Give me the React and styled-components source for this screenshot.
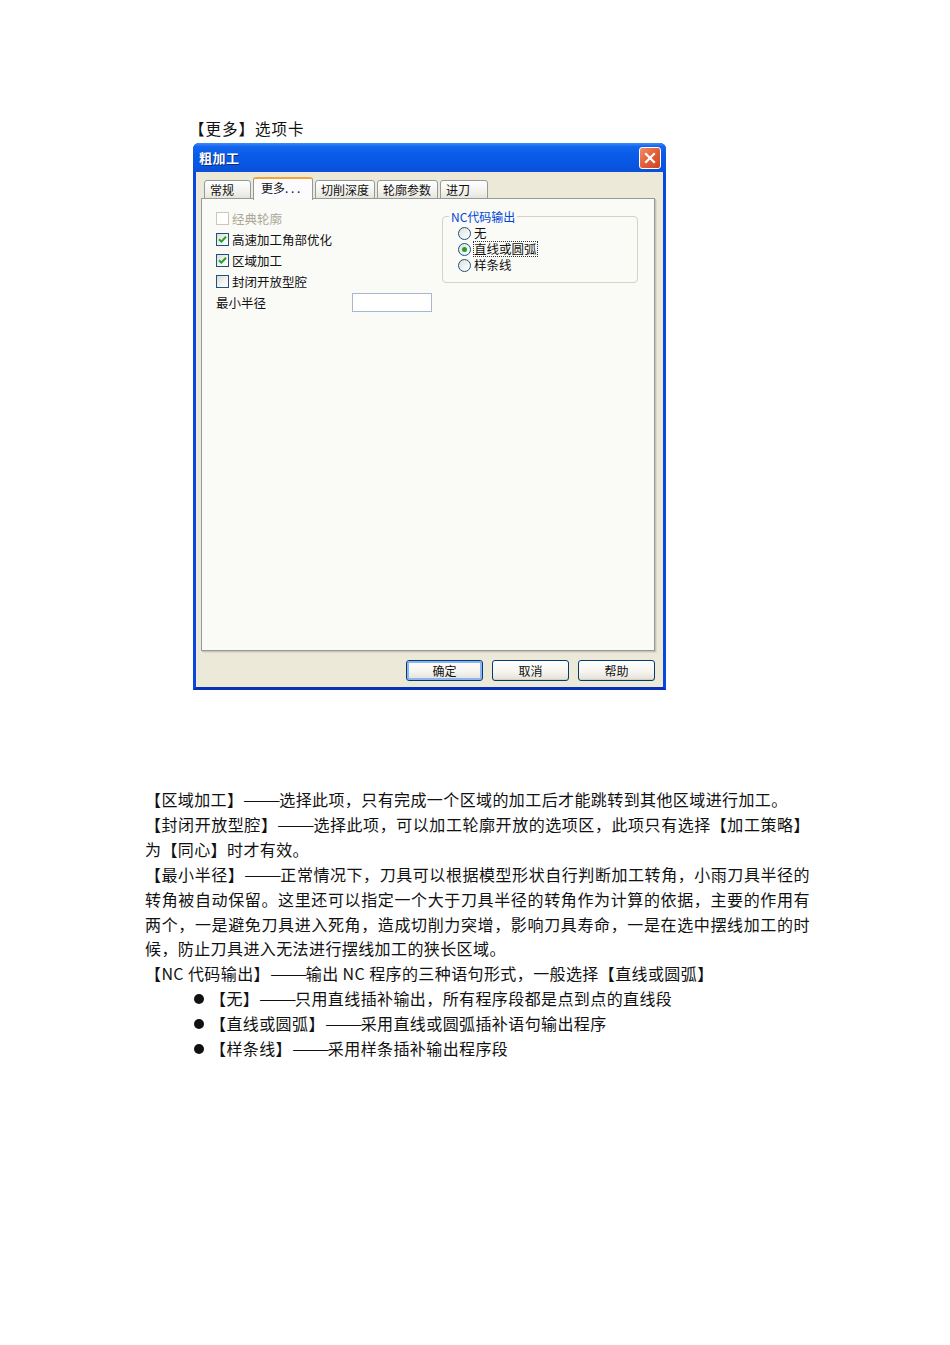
import styled, { createGlobalStyle } from 'styled-components'

const GlobalStyle = createGlobalStyle`
  html, body {
    margin: 0;
    padding: 0;
    background: #fff;
  }
  body {
    font-family: "Noto Sans CJK SC", "Noto Sans", sans-serif;
    color: #111;
  }
`;

const tabs = ['常规', '更多. . .', '切削深度', '轮廓参数', '进刀']
const tabWidths = [47, 60, 60, 61, 48]

const options = [
  { label: '经典轮廓', checked: false, disabled: true },
  { label: '高速加工角部优化', checked: true },
  { label: '区域加工', checked: true },
  { label: '封闭开放型腔', checked: false },
]

const radios = [
  { label: '无', checked: false },
  { label: '直线或圆弧', checked: true, focus: true },
  { label: '样条线', checked: false },
]

const lines = [
  { text: '【区域加工】——选择此项，只有完成一个区域的加工后才能跳转到其他区域进行加工。' },
  { text: '【封闭开放型腔】——选择此项，可以加工轮廓开放的选项区，此项只有选择【加工策略】', full: true },
  { text: '为【同心】时才有效。' },
  { text: '【最小半径】——正常情况下，刀具可以根据模型形状自行判断加工转角，小雨刀具半径的', full: true },
  { text: '转角被自动保留。这里还可以指定一个大于刀具半径的转角作为计算的依据，主要的作用有', full: true },
  { text: '两个，一是避免刀具进入死角，造成切削力突增，影响刀具寿命，一是在选中摆线加工的时', full: true },
  { text: '候，防止刀具进入无法进行摆线加工的狭长区域。' },
  { text: '【NC 代码输出】——输出 NC  程序的三种语句形式，一般选择【直线或圆弧】' },
]

const bullets = [
  '【无】——只用直线插补输出，所有程序段都是点到点的直线段',
  '【直线或圆弧】——采用直线或圆弧插补语句输出程序',
  '【样条线】——采用样条插补输出程序段',
]

// the long dash of the document font is wider than Noto's, so stretch it
function withDash(text) {
  const parts = text.split('——')
  return parts.map((p, i) => (
    <span key={i}>
      {i > 0 && <Dash>——</Dash>}
      {p}
    </span>
  ))
}

function CheckMark() {
  return (
    <svg width="9" height="9" viewBox="0 0 9 9">
      <path d="M1 4.2 L3.4 6.6 L8 1.8" fill="none" stroke="#21a121" strokeWidth="2" />
    </svg>
  )
}

function CloseIcon() {
  return (
    <svg width="12" height="12" viewBox="0 0 12 12">
      <path d="M2 2 L10 10 M10 2 L2 10" stroke="#fff" strokeWidth="2.2" strokeLinecap="square" />
    </svg>
  )
}

export default function App() {
  return (
    <Page>
      <GlobalStyle />
      <Figure>
        <Caption>【更多】选项卡</Caption>
        <Dialog>
          <TitleBar>
            <Title>粗加工</Title>
            <CloseButton><CloseIcon /></CloseButton>
          </TitleBar>
          <Body>
            <TabRow>
              {tabs.map((t, i) => (
                <Tab key={t} active={i === 1} style={{ width: tabWidths[i] }}>{t}</Tab>
              ))}
            </TabRow>
            <Panel>
              <LeftColumn>
                {options.map(o => (
                  <CheckRow key={o.label} disabled={o.disabled}>
                    <CheckBox disabled={o.disabled}>{o.checked && <CheckMark />}</CheckBox>
                    {o.label}
                  </CheckRow>
                ))}
                <FieldRow>
                  <FieldLabel>最小半径</FieldLabel>
                  <TextInput />
                </FieldRow>
              </LeftColumn>
              <GroupBox>
                <Legend>NC代码输出</Legend>
                {radios.map(r => (
                  <RadioRow key={r.label}>
                    <Radio checked={r.checked} />
                    <RadioLabel focus={r.focus}>{r.label}</RadioLabel>
                  </RadioRow>
                ))}
              </GroupBox>
            </Panel>
            <ButtonRow>
              <Button primary>确定</Button>
              <Button>取消</Button>
              <Button>帮助</Button>
            </ButtonRow>
          </Body>
        </Dialog>
      </Figure>

      <Text>
        {lines.map((l, i) => (
          <Line key={i} full={l.full}>{withDash(l.text)}</Line>
        ))}
        {bullets.map((b, i) => (
          <BulletLine key={i}>{withDash(b)}</BulletLine>
        ))}
      </Text>
    </Page>
  )
}

const Page = styled.div`
  width: 950px;
  min-height: 1345px;
  padding-left: 145px;
  box-sizing: border-box;
  overflow: hidden;
`;

const Figure = styled.div`
  margin-left: 48px;
  padding-top: 118px;
`;

const Caption = styled.div`
  font-size: 15.5px;
  line-height: 20px;
  letter-spacing: 1px;
  margin-left: -4px;
  margin-bottom: 5px;
`;

const Dialog = styled.div`
  width: 473px;
  height: 547px;
  box-sizing: border-box;
  display: flex;
  flex-direction: column;
  background: #0a3fd6;
  border-left: 3px solid #0a47e0;
  border-right: 3px solid #0a47e0;
  border-bottom: 3px solid #0830b8;
  border-radius: 6px 6px 0 0;
`;

const TitleBar = styled.div`
  height: 29px;
  margin: 0 -3px;
  padding: 0 5px 0 6px;
  display: flex;
  align-items: center;
  justify-content: space-between;
  border-radius: 6px 6px 0 0;
  background: linear-gradient(to bottom, #3d8df7 0%, #1466ee 12%, #0a5ce8 40%, #0757e4 70%, #0a50d6 100%);
`;

const Title = styled.div`
  color: #fff;
  font-weight: bold;
  font-size: 13px;
  letter-spacing: 0.5px;
  text-shadow: 1px 1px 0 #0a2a80;
`;

const CloseButton = styled.div`
  width: 20px;
  height: 20px;
  border: 1px solid #fff;
  border-radius: 3px;
  display: flex;
  align-items: center;
  justify-content: center;
  background: linear-gradient(135deg, #f0906a 0%, #e4643c 45%, #cc4220 100%);
`;

const Body = styled.div`
  flex: 1;
  background: #ece9d8;
  padding: 5px 8px 6px 5px;
  display: flex;
  flex-direction: column;
`;

const TabRow = styled.div`
  height: 22px;
  padding-left: 3px;
  display: flex;
  align-items: flex-end;
  gap: 2px;
  position: relative;
  z-index: 1;
`;

const Tab = styled.div`
  box-sizing: border-box;
  height: ${p => (p.active ? '23px' : '19px')};
  font-size: 12px;
  line-height: 1;
  padding: ${p => (p.active ? '3px 0 0 7px' : '3px 0 0 5px')};
  color: #111;
  border: 1px solid #919b9c;
  border-bottom: ${p => (p.active ? 'none' : '1px solid #919b9c')};
  border-top: ${p => (p.active ? '2px solid #f2a43a' : '1px solid #919b9c')};
  border-radius: 3px 3px 0 0;
  background: ${p => (p.active ? '#fcfcfe' : 'linear-gradient(to bottom, #ffffff 0%, #f3f2ee 60%, #e6e4dc 100%)')};
  margin-bottom: ${p => (p.active ? '-1px' : '0')};
  white-space: nowrap;
`;

const Panel = styled.div`
  box-sizing: border-box;
  height: 453px;
  margin-top: -1px;
  background: #fafaf7;
  border: 1px solid #919b9c;
  box-shadow: 1px 1px 0 #c8c5b5, 2px 2px 0 #dcd9c8;
  padding: 9px 0 0 14px;
  display: flex;
  align-items: flex-start;
`;

const LeftColumn = styled.div`
  width: 226px;
  display: flex;
  flex-direction: column;
`;

const CheckRow = styled.div`
  height: 21px;
  line-height: 16px;
  display: flex;
  align-items: center;
  gap: 3px;
  font-size: 12.5px;
  color: ${p => (p.disabled ? '#aca899' : '#111')};
`;

const CheckBox = styled.span`
  box-sizing: border-box;
  width: 13px;
  height: 13px;
  display: inline-flex;
  align-items: center;
  justify-content: center;
  border: 1px solid ${p => (p.disabled ? '#cac8bb' : '#1c5180')};
  background: ${p => (p.disabled ? '#fff' : 'linear-gradient(135deg, #dcdcd7 0%, #f4f4f2 60%, #fff 100%)')};
`;

const FieldRow = styled.div`
  height: 21px;
  line-height: 16px;
  display: flex;
  align-items: center;
`;

const FieldLabel = styled.span`
  width: 136px;
  font-size: 12.5px;
`;

const TextInput = styled.div`
  box-sizing: border-box;
  width: 80px;
  height: 19px;
  background: #fff;
  border: 1px solid #a5b8cf;
`;

const GroupBox = styled.div`
  box-sizing: border-box;
  width: 196px;
  height: 67px;
  margin-top: 8px;
  border: 1px solid #d5d3c6;
  border-radius: 4px;
  padding: 8px 0 0 15px;
  position: relative;
`;

const Legend = styled.span`
  position: absolute;
  top: -8px;
  left: 6px;
  padding: 0 2px;
  background: #fafaf7;
  color: #0046d5;
  font-size: 12px;
  line-height: 15px;
`;

const RadioRow = styled.div`
  height: 16px;
  line-height: 14px;
  display: flex;
  align-items: center;
  gap: 3px;
  font-size: 12.5px;
`;

const Radio = styled.span`
  box-sizing: border-box;
  width: 13px;
  height: 13px;
  border-radius: 50%;
  border: 1px solid #1c5180;
  background: linear-gradient(135deg, #dcdcd7 0%, #f4f4f2 60%, #fff 100%);
  display: inline-flex;
  align-items: center;
  justify-content: center;
  &::after {
    content: '';
    width: 5px;
    height: 5px;
    border-radius: 50%;
    background: ${p => (p.checked ? '#21a121' : 'transparent')};
  }
`;

const RadioLabel = styled.span`
  display: inline-block;
  line-height: 14px;
  height: 14px;
  outline: ${p => (p.focus ? '1px dotted #333' : 'none')};
`;

const ButtonRow = styled.div`
  margin-top: 9px;
  display: flex;
  justify-content: flex-end;
  gap: 9px;
`;

const Button = styled.div`
  box-sizing: border-box;
  width: 77px;
  height: 21px;
  display: flex;
  align-items: center;
  justify-content: center;
  font-size: 12px;
  border: 1px solid #003c74;
  border-radius: 3px;
  background: linear-gradient(to bottom, #ffffff 0%, #f6f5f0 55%, #e3e0d5 100%);
  box-shadow: ${p => (p.primary ? 'inset 0 0 0 2px #8cb4f2' : 'inset 0 -1px 0 #d6d0c0')};
`;

const Text = styled.div`
  width: 665px;
  margin-top: 97px;
  font-size: 16px;
  line-height: 24.9px;
  letter-spacing: 0.4px;
  color: #111;
`;

const Line = styled.div`
  text-align: ${p => (p.full ? 'justify' : 'left')};
  text-align-last: ${p => (p.full ? 'justify' : 'auto')};
  white-space: ${p => (p.full ? 'normal' : 'nowrap')};
`;

const Dash = styled.span`
  display: inline-block;
  transform: scaleX(1.4);
  transform-origin: left center;
  margin-right: 9px;
  letter-spacing: 0;
`;

const BulletLine = styled.div`
  padding-left: 65px;
  position: relative;
  white-space: nowrap;
  &::before {
    content: '';
    position: absolute;
    left: 49px;
    top: 8px;
    width: 10px;
    height: 10px;
    border-radius: 50%;
    background: #111;
  }
`;
